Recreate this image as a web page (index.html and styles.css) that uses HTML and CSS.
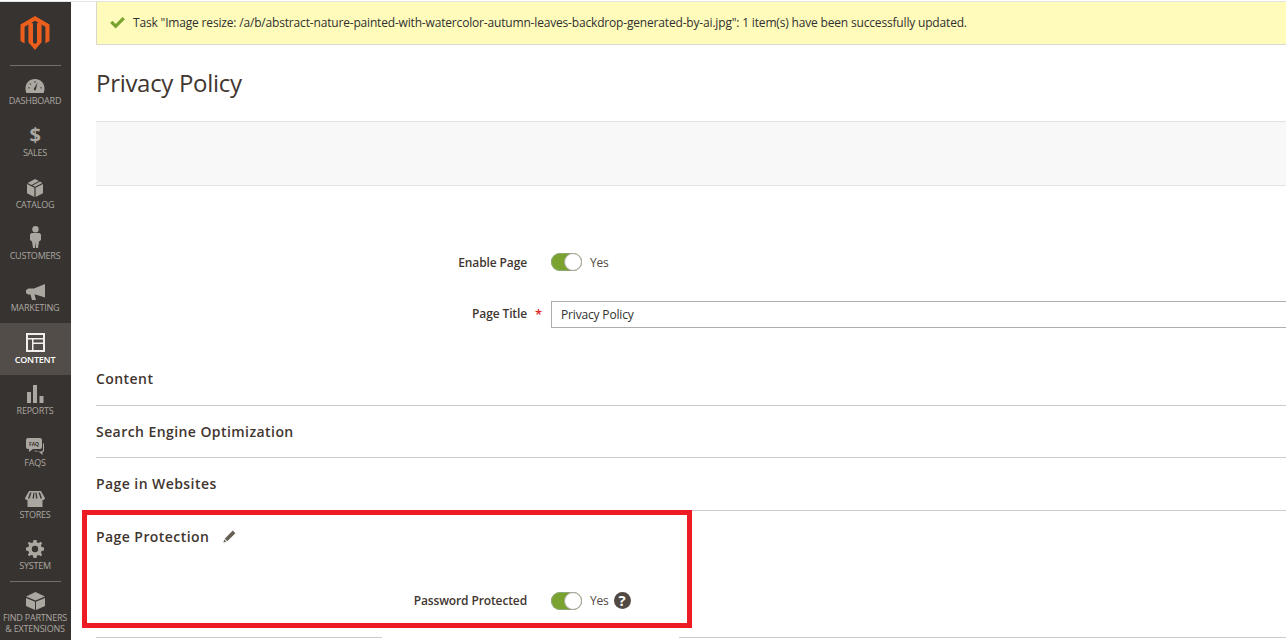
FILE: index.html
```html
<!DOCTYPE html>
<html lang="en">
<head>
<meta charset="utf-8">
<title>Privacy Policy</title>
<link rel="stylesheet" href="styles.css">
</head>
<body>
<div class="app">
  <nav class="sidebar">
    <div class="logo">
      <svg width="30" height="34" viewBox="0 0 30 34"><path fill="#eb5e1c" d="M15 0 29.500 8.400V25L25.400 27.400V10.800L15 4.800 4.600 10.800V27.400L.5 25V8.400Z"/><path fill="#eb5e1c" d="M15 8.600 19.200 6.200 21.600 7.600V26.300L15 34 8.400 26.300V7.600L10.800 6.200 13 7.400V26.500L15 28 17 26.500V7.400Z"/></svg>
    </div>
    <div class="rule rule-top"></div>
    <a class="item"><svg class="ico" width="20" height="14" viewBox="0 0 20 14"><path fill-rule="evenodd" d="M10 0C4.500 0 .5 4 .5 9.500c0 1.700.3 3.100.8 4.500h17.400c.5-1.400.8-2.800.8-4.500C19.500 4 15.500 0 10 0ZM9 9.500 12.500 3.500 11 10.300a1.100 1.100 0 1 1-2-.8ZM3 8.500H5V9.300H3ZM15 8.500H17V9.300H15ZM5 4.200 6.400 5.600 5.800 6.100 4.400 4.700ZM9.600 2H10.400V4H9.600Z"/></svg><span>DASHBOARD</span></a>
    <a class="item"><span class="dollar">$</span><span>SALES</span></a>
    <a class="item"><svg class="ico" width="16" height="18" viewBox="0 0 16 18"><path d="M8 0 12 2 4.500 5.900 .6 3.900ZM13 2.500 15.400 3.900 8 7.700 5.600 6.500ZM0 5 7.400 8.800V18L0 14.200ZM16 5V14.200L8.600 18V8.800Z"/></svg><span>CATALOG</span></a>
    <a class="item"><svg class="ico" width="11" height="22" viewBox="0 0 11 22"><circle cx="5.500" cy="3.300" r="3.200"/><path d="M1.500 7H9.500L11 8.500V14L9 15.500 8 22H6L5.500 16 5 22H3L2 15.500 0 14V8.500Z"/></svg><span>CUSTOMERS</span></a>
    <a class="item"><svg class="ico" width="19" height="16" viewBox="0 0 19 16"><path d="M19 0V13.500L9.500 10.500H8.500L10 16H6L4.500 10.500H2L0 9V6L2.500 4.500H8Z"/></svg><span>MARKETING</span></a>
    <a class="item active"><svg class="ico" width="19" height="19" viewBox="0 0 19 19"><path fill-rule="evenodd" d="M0 0H19V19H0ZM2 2V5H17V2ZM2 6.500V17H6V6.500ZM7.500 6.500V9.500H17V6.500ZM7.500 11V17H17V11Z"/></svg><span>CONTENT</span></a>
    <a class="item"><svg class="ico" width="17" height="18" viewBox="0 0 17 18"><path d="M0 7H4V18H0ZM6 0H10V18H6ZM12.500 11H16.500V18H12.500Z"/></svg><span>REPORTS</span></a>
    <a class="item"><svg class="ico" width="18" height="17" viewBox="0 0 18 17"><path d="M2 0H14A2 2 0 0 1 16 2V9A2 2 0 0 1 14 11H7L3 14V11H2A2 2 0 0 1 0 9V2A2 2 0 0 1 2 0Z"/><path d="M17 5V11.500A2 2 0 0 1 15 13.500H9L8 12.500 12 13 16.500 17V14A1.500 1.500 0 0 0 18 12.500V6.500A1.500 1.500 0 0 0 17 5Z"/><text class="faq" x="8" y="7.500">FAQ</text></svg><span>FAQS</span></a>
    <a class="item"><svg class="ico" width="20" height="16" viewBox="0 0 20 16"><path fill-rule="evenodd" d="M4 0H16L20 7C20 8.500 18.500 9 17.500 9V16H2.500V9C1.500 9 0 8.500 0 7ZM5 1.500 3 7.500H4.500L6.500 1.500ZM8.500 1.500 7.500 7.500H9L9.500 1.500ZM10.500 1.500 11 7.500H12.500L11.500 1.500ZM13.500 1.500 15.500 7.500H17L15 1.500Z"/></svg><span>STORES</span></a>
    <a class="item"><svg class="ico" width="18" height="18" viewBox="0 0 18 18"><path fill-rule="evenodd" d="M7.500 0H10.500L11 2.400 12.700 3.100 14.800 1.800 16.200 3.200 14.900 5.300 15.600 7 18 7.500V10.500L15.600 11 14.900 12.700 16.200 14.800 14.800 16.200 12.700 14.900 11 15.600 10.500 18H7.500L7 15.600 5.300 14.900 3.200 16.200 1.800 14.800 3.100 12.700 2.400 11 0 10.500V7.500L2.400 7 3.100 5.300 1.800 3.200 3.200 1.800 5.300 3.100 7 2.400ZM9 5.800A3.200 3.200 0 1 0 9 12.200 3.200 3.200 0 0 0 9 5.800Z"/></svg><span>SYSTEM</span></a>
    <div class="rule rule-lower"></div>
    <a class="item item-last"><svg class="ico" width="19" height="18" viewBox="0 0 19 18"><path d="M9.500 0 19 4.500 9.500 8.500 0 4.500ZM0 6 9 9.800V18L0 14ZM19 6V14L10 18V9.800Z"/></svg><span>FIND PARTNERS<br>&amp; EXTENSIONS</span></a>
  </nav>

  <main class="main">
    <div class="message">
      <svg class="check" width="15" height="12" viewBox="0 0 16 13"><path fill="#79a22e" d="M0 6.500 2.500 4 6 7.500 13.500 0 16 2.500 6 12.500Z"/></svg>
      <span class="msg-text">Task "Image resize: /a/b/abstract-nature-painted-with-watercolor-autumn-leaves-backdrop-generated-by-ai.jpg": 1 item(s) have been successfully updated.</span>
    </div>
    <h1 class="title">Privacy Policy</h1>
    <div class="actions"></div>

    <div class="field field-enable">
      <label class="label">Enable Page</label>
      <span class="toggle"><span class="knob"></span></span>
      <span class="value">Yes</span>
    </div>
    <div class="field field-title">
      <label class="label label-up">Page Title<span class="req">*</span></label>
      <div class="input">Privacy Policy</div>
    </div>

    <section class="section first"><h2>Content</h2></section>
    <section class="section"><h2>Search Engine Optimization</h2></section>
    <section class="section"><h2>Page in Websites</h2></section>
    <section class="section open">
      <h2>Page Protection<svg class="pencil" width="13" height="13" viewBox="0 0 13 13"><path fill="#676056" d="M9.800.6 12.400 3.200 4.300 11.300 1.700 8.700ZM1.200 9.600 3.400 11.800.4 12.600Z"/></svg></h2>
      <div class="field field-password">
        <label class="label">Password Protected</label>
        <span class="toggle"><span class="knob"></span></span>
        <span class="value">Yes</span>
        <span class="help">?</span>
      </div>
    </section>
    <div class="bottom-rule"><span class="seg seg-left"></span><span class="seg seg-right"></span></div>
  </main>
</div>
<div class="highlight"></div>
</body>
</html>
```

FILE: styles.css
```css
* { box-sizing: border-box; }
html, body { margin: 0; height: 640px; overflow: hidden; background: #fff; }
body { font-family: "Open Sans", sans-serif; color: #303030; position: relative; }

.app { display: flex; height: 640px; border-top: 1px solid #e3e3e3; margin-top: 1px; }

.sidebar { width: 71px; flex: none; background: #373330; height: 638px; display: flex; flex-direction: column; overflow: hidden; }
.logo { height: 63px; display: flex; justify-content: center; padding: 14px 1px 0 0; }
.rule { height: 1px; background: #736e69; margin: 0 10px; flex: none; }
.rule-top { margin-bottom: -1px; }
.item { height: 51.67px; flex: none; display: flex; flex-direction: column; align-items: center; justify-content: flex-end; padding: 0 1px 9.3px 0; color: #aaa6a0; font-size: 9px; line-height: 12px; text-align: center; white-space: nowrap; letter-spacing: -.22px; }
.ico { fill: #aaa6a0; margin-bottom: 2px; flex: none; }
.dollar { font-size: 20px; font-weight: 700; line-height: 20px; margin-bottom: 2px; }
.item.active { background: #524d49; color: #fff; font-weight: 600; }
.item.active .ico { fill: #f0efed; }
.faq { font-size: 5px; font-weight: 700; fill: #373330; text-anchor: middle; letter-spacing: 0; }
.rule-lower { margin-top: -1px; }
.item-last { height: 56px; padding-bottom: 0; justify-content: flex-start; padding-top: 10px; line-height: 11.5px; letter-spacing: -.2px; }

.main { flex: 1; min-width: 0; padding-left: 25px; }

.message { height: 43px; border: 1px solid #d8d8d0; border-top: 0; border-right: 0; background: #fffbbb; display: flex; align-items: center; padding-left: 13px; font-size: 12px; letter-spacing: -.175px; color: #303030; white-space: nowrap; }
.msg-text { margin-bottom: 2px; }
.check { margin-right: 8px; flex: none; }

.title { margin: 0; font-size: 24px; letter-spacing: -.3px; font-weight: 400; line-height: 33px; color: #41362f; padding-top: 21px; height: 76px; }
.actions { height: 65px; background: #f8f8f8; border-top: 1px solid #e3e3e3; border-bottom: 1px solid #e3e3e3; }

.field { display: flex; align-items: center; font-size: 12px; letter-spacing: -.17px; color: #303030; }
.label { width: 431px; text-align: right; font-weight: 550; letter-spacing: -.12px; color: #41362f; flex: none; position: relative; }
.label-up { margin-bottom: 2px; }
.field-enable { height: 24px; margin-top: 64px; }
.field-title { height: 27px; margin-top: 27px; }
.toggle { width: 31px; height: 18px; border-radius: 9px; background: #79a22e; margin-left: 24px; position: relative; flex: none; box-shadow: inset 0 0 0 1px #8fa878; }
.knob { position: absolute; right: 0; top: 0; width: 18px; height: 18px; border-radius: 50%; background: #fff; border: 1px solid #aaa6a0; }
.value { margin-left: 8px; color: #514943; }
.req { position: absolute; right: -15px; top: 0; color: #e22626; font-size: 13px; }
.input { margin-left: 24px; flex: 1; height: 27px; border: 1px solid #adadad; border-right: 0; padding-left: 9px; line-height: 25px; color: #303030; }

.section { border-bottom: 1px solid #ccc; height: 52.3px; }
.section.first { height: 56px; margin-top: 22px; }
.section h2 { margin: 0; font-size: 14px; font-weight: 600; letter-spacing: .43px; color: #41362f; line-height: 20px; padding-top: 16px; display: flex; align-items: center; }
.section.first h2 { padding-top: 19px; }
.section.open { height: auto; border-bottom: 0; }
.pencil { margin-left: 14px; }

.field-password { height: 24px; margin-top: 42px; }
.help { width: 17px; height: 17px; border-radius: 50%; background: #514943; color: #fff; font-size: 15px; font-weight: 700; line-height: 17px; text-align: center; margin-left: 5px; flex: none; letter-spacing: 0; }

.bottom-rule { display: flex; height: 1px; margin-top: 24px; }
.seg { height: 1px; background: #ccc; }
.seg-left { width: 286px; flex: none; }
.seg-right { flex: 1; margin-left: 297px; }

.highlight { position: absolute; left: 82px; top: 510px; width: 610px; height: 118px; border: 5px solid #ed1c24; pointer-events: none; }
```
